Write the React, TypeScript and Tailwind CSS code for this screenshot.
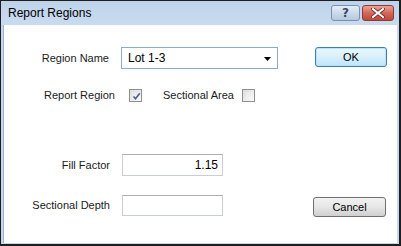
import React from 'react';

function CheckBox({ checked }: { checked?: boolean }) {
  return (
    <div className="w-[13px] h-[13px] border border-[#8f8f8f] bg-gradient-to-br from-[#dcdcdc] to-[#fbfbfb] p-[2px]">
      <div className="w-full h-full bg-gradient-to-br from-[#e4e4e4] to-[#f7f7f7] relative">
        {checked && (
          <svg viewBox="0 0 9 9" className="absolute inset-0 w-[9px] h-[9px]">
            <path d="M1.5 4.5 L3.5 6.8 L7.8 1.2" fill="none" stroke="#4a5f97" strokeWidth="1.6" />
          </svg>
        )}
      </div>
    </div>
  );
}

function TitleButtons() {
  return (
    <div className="flex gap-[2px] mt-[4px] mr-[5px]">
      <div className="w-[29px] h-[16px] rounded-[3px] border border-[#7b8fab] bg-gradient-to-b from-[#e6eef8] via-[#cbd9ea] to-[#b6c9e0] flex items-center justify-center">
        <span className="text-[12px] leading-none font-bold text-[#3c4a5e]" style={{ fontFamily: '"DejaVu Sans", sans-serif' }}>?</span>
      </div>
      <div className="w-[32px] h-[16px] rounded-[3px] border border-[#8e3b31] bg-gradient-to-b from-[#e8a597] via-[#d2685a] to-[#c2473a] flex items-center justify-center">
        <svg viewBox="0 0 14 10" className="w-[14px] h-[10px]">
          <path d="M2 1 L12 9 M12 1 L2 9" stroke="#6b2a22" strokeWidth="3.6" strokeLinecap="square" />
          <path d="M2 1 L12 9 M12 1 L2 9" stroke="#ffffff" strokeWidth="2" strokeLinecap="square" />
        </svg>
      </div>
    </div>
  );
}

export default function App() {
  return (
    <div
      className="w-[401px] h-[246px] border border-[#1e1e1e] border-b-2 border-r-2 bg-[#c6d8ee] flex flex-col text-[11px] text-[#1a1a1a]"
      style={{ fontFamily: '"Liberation Sans", Arial, sans-serif' }}
    >
      {/* title bar */}
      <div className="h-[24px] flex items-start justify-between bg-gradient-to-b from-[#bed3ea] to-[#c9dbef]">
        <span className="ml-[7px] mt-[5px] text-[12px] leading-[14px] text-black">Report Regions</span>
        <TitleButtons />
      </div>

      {/* client area */}
      <div className="flex-1 mx-[2px] mb-[1px] bg-white border-l border-[#9fb4cc] flex flex-col">
        {/* Region Name */}
        <div className="flex items-start mt-[22px]">
          <div className="w-[105px] h-[22px] flex items-center justify-end">Region Name</div>
          <div className="ml-[12px] w-[157px] h-[22px] border border-[#8eaacb] flex items-center justify-between pl-[6px] pr-[6px]">
            <span className="text-[12px] text-black">Lot 1-3</span>
            <svg viewBox="0 0 7 4" className="w-[7px] h-[4px] mt-[1px]">
              <path d="M0 0 H7 L3.5 4 Z" fill="#000" />
            </svg>
          </div>
          <div className="ml-[37px] w-[72px] h-[20px] rounded-[3px] border border-[#3c7fb1] bg-gradient-to-b from-[#eaf6fd] via-[#d9f0fc] to-[#bde4f9] flex items-center justify-center shadow-[inset_0_0_0_1px_#b7e3fb]">
            <span className="text-[11px] text-black">OK</span>
          </div>
        </div>

        {/* checkboxes */}
        <div className="flex items-center mt-[19px] h-[14px]">
          <span className="ml-[40px] w-[85px]">Report Region</span>
          <CheckBox checked />
          <span className="ml-[21px]">Sectional Area</span>
          <div className="ml-[8px]">
            <CheckBox />
          </div>
        </div>

        {/* Fill Factor */}
        <div className="flex items-center mt-[52px]">
          <div className="w-[106px] text-right">Fill Factor</div>
          <div className="ml-[12px] w-[101px] h-[22px] border border-[#c9ced6] border-t-[#abadb3] flex items-center justify-end pr-[4px]">
            <span className="text-[12px] text-black">1.15</span>
          </div>
        </div>

        {/* Sectional Depth */}
        <div className="flex items-start mt-[19px]">
          <div className="w-[106px] h-[21px] flex items-center justify-end">Sectional Depth</div>
          <div className="ml-[12px] w-[101px] h-[21px] border border-[#c9ced6] border-t-[#abadb3]"></div>
          <div className="ml-[90px] mt-[2px] w-[73px] h-[20px] rounded-[3px] border border-[#707070] bg-gradient-to-b from-[#f2f2f2] via-[#e6e6e6] to-[#d0d0d0] flex items-center justify-center">
            <span className="text-[11px] text-black">Cancel</span>
          </div>
        </div>
      </div>
    </div>
  );
}
